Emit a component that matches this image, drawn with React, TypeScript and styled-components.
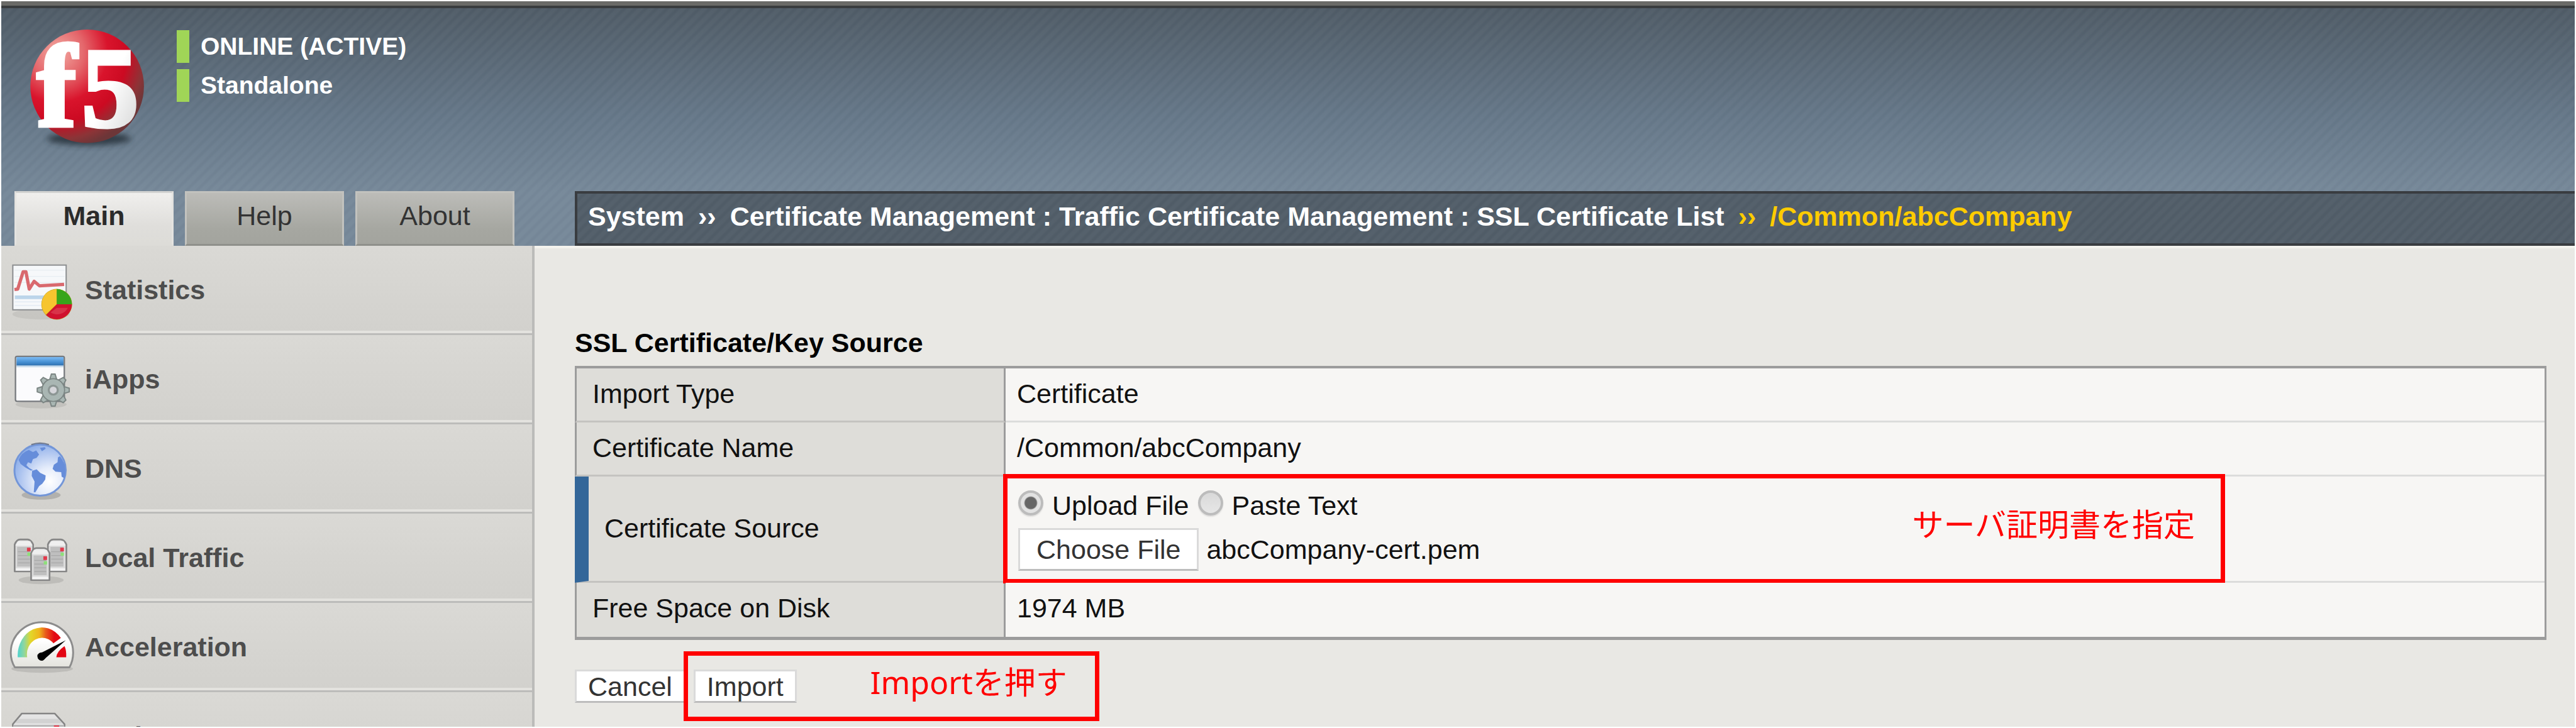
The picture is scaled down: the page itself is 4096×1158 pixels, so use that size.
import React from "react";
import styled, { createGlobalStyle, css } from "styled-components";

const GlobalStyle = createGlobalStyle`
  *, *::before, *::after { box-sizing: border-box; }
  body {
    margin: 0;
    background: #fff;
    font-family: "Liberation Sans", Arial, sans-serif;
    font-size: 43px;
    line-height: 50px;
    color: #111;
  }
`;

const jpFont = `"Noto Sans", "Noto Sans CJK JP", sans-serif`;
const stripes = `repeating-linear-gradient(135deg, rgba(255,255,255,0.025) 0px, rgba(255,255,255,0.025) 4px, rgba(0,0,0,0.01) 7px, rgba(0,0,0,0.01) 9px, rgba(255,255,255,0.025) 12px)`;

const Frame = styled.div`
  display: flex;
  flex-direction: column;
  height: 100vh;
  padding: 2px;
  overflow: hidden;
`;

const Header = styled.header`
  flex: none;
  border-top: 7px solid #6a6a67;
  background: ${stripes}, linear-gradient(#4f5b66, #657788 46%, #768899 78%, #768899);
`;

const Brand = styled.div`
  display: flex;
  align-items: flex-start;
  gap: 27px;
  height: 295px;
  padding: 16px 0 0 27px;
  border-top: 4px solid #393c3e;
`;

const Statuses = styled.ul`
  margin: 0;
  padding: 19px 0 0;
  list-style: none;
  display: grid;
  gap: 10px;
`;

const Status = styled.li`
  display: flex;
  align-items: center;
  height: 52px;
  padding-left: 18px;
  border-left: 20px solid #a0d557;
  font-size: 39px;
  font-weight: bold;
  color: #fff;
`;

const NavRow = styled.div`
  display: flex;
`;

const Tabs = styled.nav`
  display: flex;
  flex: none;
  gap: 18px;
  width: 912px;
  padding-left: 21px;
`;

const Tab = styled.a<{ $active?: boolean }>`
  width: 253px;
  height: 87px;
  padding-top: 11px;
  text-align: center;
  text-decoration: none;
  color: #333;
  border: 3px solid #c2c2be;
  border-bottom-color: #8f908b;
  background: linear-gradient(#bcbcb8, #a6a7a1 70%, #a3a49e);
  ${(p) =>
    p.$active &&
    css`
      font-weight: bold;
      color: #2b2b2b;
      border-color: #d3d3d1 #e4e3e0 #dddcd8;
      background: linear-gradient(#f0efed, #dfdedb 65%, #dddcd8);
    `}
`;

const Breadcrumb = styled.nav`
  display: flex;
  flex: 1;
  gap: 22px;
  align-items: flex-start;
  padding: 11px 0 0 17px;
  border: 4px solid #393c40;
  border-right: 0;
  background: ${stripes}, #515d68;
  font-weight: bold;
  color: #fff;
  white-space: nowrap;
`;

const Crumb = styled.a<{ $current?: boolean }>`
  color: ${(p) => (p.$current ? "#ffcc00" : "#fff")};
  text-decoration: none;
`;

const Body = styled.div`
  display: flex;
  flex: 1;
  min-height: 0;
`;

const Sidebar = styled.nav`
  flex: none;
  width: 848px;
  border-right: 4px solid #bbbbb9;
  overflow: hidden;
`;

const SideItem = styled.a`
  display: flex;
  align-items: center;
  gap: 15px;
  height: 142px;
  border-bottom: 3px solid #bcbcba;
  background: linear-gradient(#dad9d5, #d2d1cd);
  box-shadow: inset 0 -4px #e3e2de;
  font-weight: bold;
  color: #4d4d4d;
  text-decoration: none;
`;

const Icon = styled.svg`
  flex: none;
  width: 118px;
  height: 139px;
`;

const Main = styled.main`
  flex: 1;
  padding: 125px 45px 0 64px;
  border-top: 4px solid #f4f3ee;
  background: #e9e8e4;
`;

const Heading = styled.h1`
  margin: 0 0 12px;
  font-size: 43px;
  line-height: 50px;
  color: #000;
`;

const Table = styled.table`
  width: 100%;
  border: solid #9c9c9c;
  border-width: 4px 3px 5px 0;
  border-spacing: 0;
`;

const Label = styled.th<{ $required?: boolean }>`
  width: 685px;
  padding: 15px 0 18px 25px;
  text-align: left;
  font-weight: normal;
  background: #deddd9;
  border-left: ${(p) => (p.$required ? "22px solid #336699" : "3px solid #9c9c9c")};
  border-right: 3px solid #9c9c9c;
  border-bottom: 3px solid #c4c3c0;
  tr:last-child > & { padding-bottom: 21px; border-bottom: 0; }
`;

const Value = styled.td`
  position: relative;
  padding: 15px 18px 18px;
  background: #f7f6f4;
  border-bottom: 3px solid #dcdcdb;
  tr:last-child > & { padding-bottom: 21px; border-bottom: 0; }
`;

const SourceValue = styled(Value)`
  padding: 21px 20px 16px;
`;

const Choices = styled.div`
  display: flex;
  gap: 14px;
  margin-bottom: 11px;
`;

const Choice = styled.label`
  display: flex;
  gap: 14px;
`;

const Radio = styled.input`
  appearance: none;
  width: 40px;
  height: 40px;
  margin: 1px 0 0;
  border: 4px solid #bcbcbc;
  border-radius: 50%;
  background: linear-gradient(#d9d9d9, #e6e6e6);
  box-shadow: 0 2px 2px rgba(0, 0, 0, 0.1);
  &:checked {
    background: radial-gradient(circle, #666 0 9px, #e2e2e2 11px);
  }
`;

const FileRow = styled.div`
  display: flex;
  align-items: center;
  gap: 12px;
`;

const buttonLook = css`
  border: 3px solid #dadada;
  border-bottom-color: #bdbdbd;
  background: #fff;
  color: #333;
  font: inherit;
`;

const FileButton = styled.label`
  ${buttonLook}
  height: 68px;
  padding: 6px 26px 0;
`;

const FileInput = styled.input`
  position: absolute;
  width: 1px;
  height: 1px;
  opacity: 0;
`;

const Button = styled.button`
  ${buttonLook}
  height: 53px;
  padding: 0 18px;
  line-height: 46px;
`;

const Actions = styled.div`
  display: flex;
  gap: 13px;
  margin-top: 47px;
`;

const ImportAction = styled.div`
  position: relative;
  display: flex;
`;

const Note = styled.div`
  position: absolute;
  display: flex;
  align-items: center;
  justify-content: flex-end;
  border: 7px solid #f00;
  color: #f00;
  font-family: ${jpFont};
  font-size: 50px;
  line-height: 60px;
  white-space: nowrap;
  pointer-events: none;
`;

const SourceNote = styled(Note)`
  inset: -4px 508px -4px -4px;
  padding: 0 41px 14px 0;
`;

const ImportNote = styled(Note)`
  top: -29px;
  left: -16px;
  width: 661px;
  height: 111px;
  padding: 0 44px 14px 0;
`;

const Logo = () => (
  <svg width="225" height="225" viewBox="0 0 690 690" role="img" aria-label="f5">
    <defs>
      <radialGradient id="ball" cx="0.24" cy="0.2" r="0.85">
        <stop offset="0" stopColor="#f3aca4" />
        <stop offset="0.28" stopColor="#e4656a" />
        <stop offset="0.52" stopColor="#d9142c" />
        <stop offset="0.72" stopColor="#cc0a22" />
        <stop offset="0.9" stopColor="#8c3437" />
        <stop offset="1" stopColor="#6d3638" />
      </radialGradient>
      <linearGradient id="digits" x1="0" y1="0" x2="1" y2="1">
        <stop offset="0.5" stopColor="#fff" />
        <stop offset="1" stopColor="#cfd0d0" />
      </linearGradient>
      <filter id="soft" x="-30%" y="-100%" width="160%" height="300%">
        <feGaussianBlur stdDeviation="14" />
      </filter>
    </defs>
    <ellipse cx="345" cy="588" rx="205" ry="32" fill="#28323b" opacity="0.85" filter="url(#soft)" />
    <circle cx="336" cy="332" r="277" fill="url(#ball)" />
    <g fontFamily="Liberation Serif, serif" fontWeight="bold" stroke="#fff">
      <text x="92" y="525" fontSize="572" fill="#fff" strokeWidth="20">f</text>
      <text x="308" y="526" fontSize="560" fill="url(#digits)" stroke="url(#digits)" strokeWidth="16">5</text>
    </g>
  </svg>
);

const StatisticsIcon = () => (
  <Icon viewBox="6 27 361 426" aria-hidden="true">
    <ellipse cx="200" cy="360" rx="140" ry="26" fill="#000" opacity="0.06" />
    <rect x="62" y="121" width="260" height="218" fill="#f6f8fa" stroke="#8b8d8f" strokeWidth="6" />
    <path d="M70 146H314M70 176H314M70 206H314" stroke="#e8edf2" strokeWidth="4" />
    <path d="M72 278H230" stroke="#bcd5ea" strokeWidth="18" />
    <path d="M72 300H210M72 318H210" stroke="#dfe8f2" strokeWidth="4" />
    <path d="M70 240L86 238L112 154H126L142 238L166 200L192 222L312 215" fill="none" stroke="#d9696e" strokeWidth="16" strokeLinejoin="round" />
    <circle cx="276" cy="312" r="75" fill="#c9a21f" />
    <path d="M276 312L223 362A73 73 0 0 1 276 239Z" fill="#f6c52f" />
    <path d="M276 312V238A74 74 0 0 1 350 312Z" fill="#38a51b" />
    <path d="M276 312H350A74 74 0 0 1 224 364Z" fill="#d0122f" />
    <path d="M276 330H330A56 50 0 0 1 246 352Z" fill="#dd4a5c" opacity="0.6" />
  </Icon>
);

const gearTeeth = [0, 45, 90, 135, 180, 225, 270, 315];

const IAppsIcon = () => (
  <Icon viewBox="6 462 361 426" aria-hidden="true">
    <defs>
      <linearGradient id="bar" x1="0" y1="0" x2="0" y2="1">
        <stop offset="0" stopColor="#7cbcf5" />
        <stop offset="0.6" stopColor="#468fd2" />
        <stop offset="1" stopColor="#2f70ae" />
      </linearGradient>
    </defs>
    <ellipse cx="200" cy="800" rx="125" ry="20" fill="#000" opacity="0.08" />
    <rect x="75" y="566" width="238" height="219" rx="8" fill="#fbfbfd" stroke="#76797d" strokeWidth="7" />
    <rect x="80" y="569" width="229" height="42" fill="url(#bar)" />
    <rect x="80" y="611" width="229" height="8" fill="#c9dcec" />
    <g transform="translate(259 730)" stroke="#7b8583" strokeWidth="6" fill="#a9b6b3">
      {gearTeeth.map((a) => (
        <path key={a} d="M-17 -52L-9 -78H9L17 -52Z" transform={`rotate(${a})`} />
      ))}
      <circle r="55" />
      <circle r="52" stroke="none" />
      <circle r="22" fill="#d5d5da" stroke="#8c9694" strokeWidth="10" />
    </g>
  </Icon>
);

const DnsIcon = () => (
  <Icon viewBox="6 -33 361 426" aria-hidden="true">
    <defs>
      <radialGradient id="sea" cx="0.68" cy="0.72" r="0.75">
        <stop offset="0" stopColor="#fff" />
        <stop offset="0.35" stopColor="#e6edfb" />
        <stop offset="0.75" stopColor="#b0c6f0" />
        <stop offset="1" stopColor="#8fb0ea" />
      </radialGradient>
    </defs>
    <ellipse cx="200" cy="312" rx="95" ry="22" fill="#000" opacity="0.16" />
    <circle cx="195" cy="190" r="125" fill="url(#sea)" stroke="#7396d8" strokeWidth="9" />
    <path d="M152 66A130 130 0 0 1 238 66" fill="none" stroke="#737c90" strokeWidth="7" />
    <path d="M90 140Q104 104 140 92L160 102L176 94L190 114L178 130L160 136L152 158L136 152L128 166L142 180L160 190L150 192L124 178L100 160Z" fill="#668dda" />
    <path d="M194 82L218 78L222 86L204 98Z" fill="#668dda" />
    <path d="M156 194L178 186L196 204L222 216L220 236L206 256L190 268L172 298H164L168 246L154 218Z" fill="#668dda" />
    <path d="M318 200L314 230L300 222L298 200L270 198L256 184L262 164L280 152L282 128L292 122L304 140L316 166Z" fill="#668dda" />
  </Icon>
);

const Server = ({ x, y }: { x: number; y: number }) => (
  <g transform={`translate(${x} ${y})`}>
    <path d="M4 28Q14 4 30 4H68Q84 6 94 28V160H4Z" fill="#dcdcdc" stroke="#868686" strokeWidth="8" strokeLinejoin="round" />
    <path d="M8 34H90L80 12H20Z" fill="#efefef" />
    <rect x="16" y="40" width="64" height="96" fill="#bfbfbf" />
    <path d="M20 64H78M20 82H78M20 100H78M20 118H78" stroke="#a9a9a9" strokeWidth="4" />
    <rect x="10" y="144" width="78" height="12" fill="#f4f4f4" />
    <rect x="64" y="44" width="18" height="18" fill="#e23a4c" />
    <rect x="66" y="68" width="16" height="16" fill="#8ee07a" />
  </g>
);

const TrafficIcon = () => (
  <Icon viewBox="6 162 361 426" aria-hidden="true">
    <ellipse cx="200" cy="486" rx="110" ry="20" fill="#000" opacity="0.1" />
    <Server x={67} y={284} />
    <Server x={229} y={284} />
    <Server x={147} y={326} />
  </Icon>
);

const AccelerationIcon = () => (
  <Icon viewBox="6 597 361 426" aria-hidden="true">
    <defs>
      <linearGradient id="dial" x1="0" y1="0" x2="1" y2="0">
        <stop offset="0" stopColor="#4fd3cf" />
        <stop offset="0.15" stopColor="#8ed6a0" />
        <stop offset="0.3" stopColor="#e3d72a" />
        <stop offset="0.5" stopColor="#efb51c" />
        <stop offset="0.65" stopColor="#e85a1b" />
        <stop offset="0.85" stopColor="#e30a14" />
      </linearGradient>
      <linearGradient id="face" x1="0" y1="0" x2="0" y2="1">
        <stop offset="0.4" stopColor="#fff" />
        <stop offset="1" stopColor="#e3e3dd" />
      </linearGradient>
    </defs>
    <ellipse cx="205" cy="918" rx="150" ry="20" fill="#000" opacity="0.1" />
    <path d="M72 911Q52 880 52 840A152 149 0 0 1 356 840Q356 880 338 911Z" fill="url(#face)" stroke="#8c8c8c" strokeWidth="9" strokeLinejoin="round" />
    <path d="M86 862A118 136 0 0 1 296 768L260 794A74 80 0 0 0 132 862Z" fill="url(#dial)" />
    <path d="M274 862Q276 834 314 808Q324 830 322 862Z" fill="#e30613" />
    <path d="M320 779L182 850Q184 882 208 878Z" fill="#000" />
    <circle cx="202" cy="858" r="20" fill="#000" />
  </Icon>
);

const DeviceIcon = () => (
  <Icon viewBox="6 1032 361 426" aria-hidden="true">
    <path d="M62 1188L106 1136H266L314 1188V1300H62Z" fill="#e4e4e4" stroke="#858585" strokeWidth="8" strokeLinejoin="round" />
    <path d="M72 1184L90 1162H284L304 1184Z" fill="#d2d2d2" />
    <path d="M64 1192H312V1296H64Z" fill="#b5b5b5" />
    <rect x="262" y="1194" width="26" height="14" fill="#e23a4c" />
  </Icon>
);

const menu = [
  { label: "Statistics", Glyph: StatisticsIcon },
  { label: "iApps", Glyph: IAppsIcon },
  { label: "DNS", Glyph: DnsIcon },
  { label: "Local Traffic", Glyph: TrafficIcon },
  { label: "Acceleration", Glyph: AccelerationIcon },
  { label: "Device Management", Glyph: DeviceIcon },
];

export default function App() {
  return (
    <>
      <GlobalStyle />
      <Frame>
        <Header>
          <Brand>
            <Logo />
            <Statuses>
              <Status>ONLINE (ACTIVE)</Status>
              <Status>Standalone</Status>
            </Statuses>
          </Brand>
          <NavRow>
            <Tabs aria-label="Sections">
              <Tab href="#main" $active>Main</Tab>
              <Tab href="#help">Help</Tab>
              <Tab href="#about">About</Tab>
            </Tabs>
            <Breadcrumb aria-label="Breadcrumb">
              <Crumb href="#system">System</Crumb>
              <span>››</span>
              <Crumb href="#certificates">
                Certificate Management : Traffic Certificate Management : SSL Certificate List
              </Crumb>
              <Crumb as="span" $current>››</Crumb>
              <Crumb href="#abcCompany" $current>/Common/abcCompany</Crumb>
            </Breadcrumb>
          </NavRow>
        </Header>
        <Body>
          <Sidebar aria-label="Modules">
            {menu.map(({ label, Glyph }) => (
              <SideItem key={label} href="#">
                <Glyph />
                {label}
              </SideItem>
            ))}
          </Sidebar>
          <Main>
            <Heading>SSL Certificate/Key Source</Heading>
            <Table>
              <tbody>
                <tr>
                  <Label scope="row">Import Type</Label>
                  <Value>Certificate</Value>
                </tr>
                <tr>
                  <Label scope="row">Certificate Name</Label>
                  <Value>/Common/abcCompany</Value>
                </tr>
                <tr>
                  <Label scope="row" $required>Certificate Source</Label>
                  <SourceValue>
                    <Choices>
                      <Choice>
                        <Radio type="radio" name="source" value="upload" defaultChecked />
                        Upload File
                      </Choice>
                      <Choice>
                        <Radio type="radio" name="source" value="paste" />
                        Paste Text
                      </Choice>
                    </Choices>
                    <FileRow>
                      <FileInput type="file" id="certificate-file" />
                      <FileButton htmlFor="certificate-file">Choose File</FileButton>
                      <span>abcCompany-cert.pem</span>
                    </FileRow>
                    <SourceNote>サーバ証明書を指定</SourceNote>
                  </SourceValue>
                </tr>
                <tr>
                  <Label scope="row">Free Space on Disk</Label>
                  <Value>1974 MB</Value>
                </tr>
              </tbody>
            </Table>
            <Actions>
              <Button type="button">Cancel</Button>
              <ImportAction>
                <Button type="button">Import</Button>
                <ImportNote>Importを押す</ImportNote>
              </ImportAction>
            </Actions>
          </Main>
        </Body>
      </Frame>
    </>
  );
}
